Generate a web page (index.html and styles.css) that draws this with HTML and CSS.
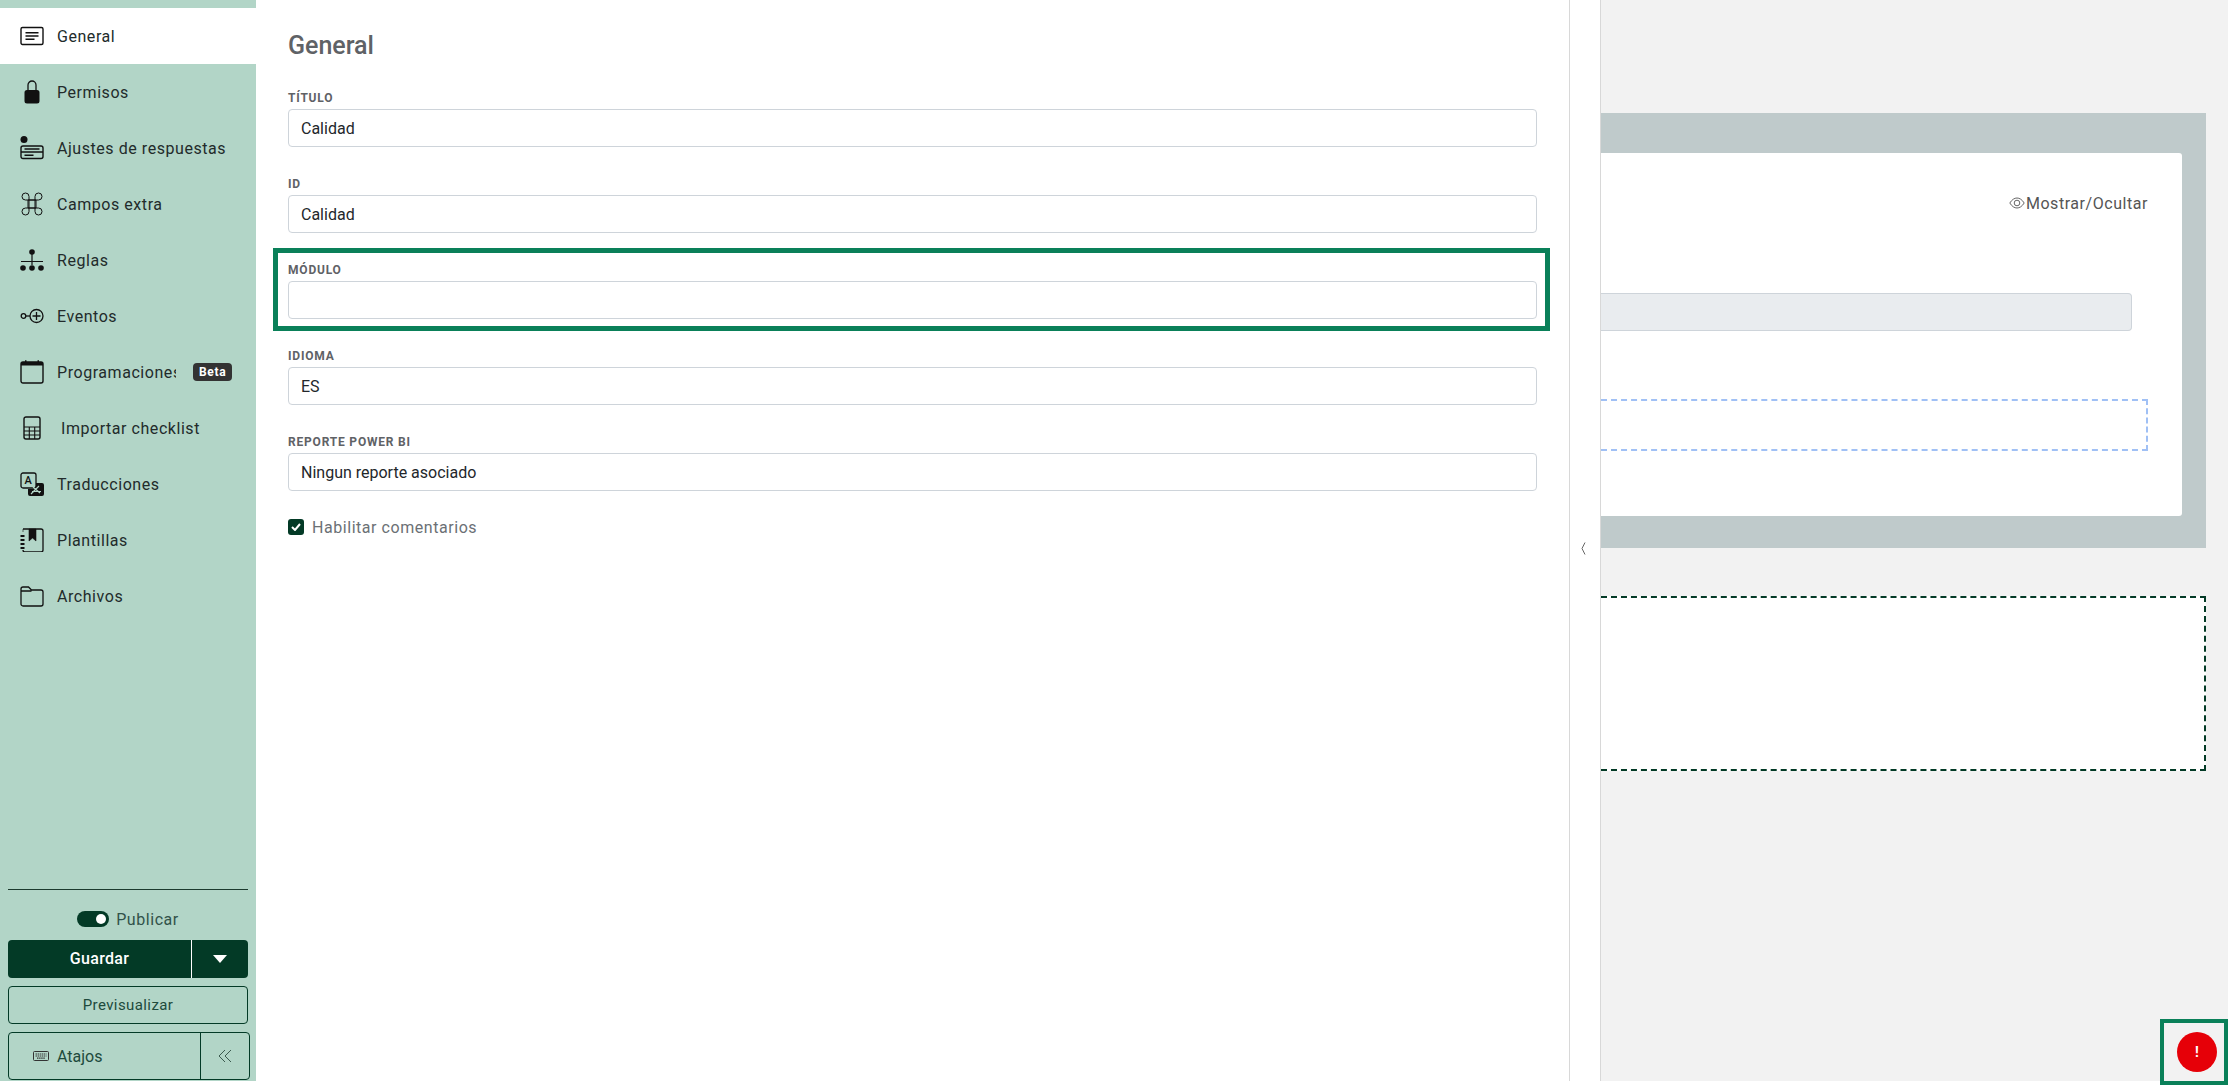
FILE: index.html
```html
<!DOCTYPE html>
<html lang="es">
<head>
  <meta charset="UTF-8">
  <title>General</title>
  <link rel="stylesheet" href="styles.css">
</head>
<body>
  <div class="App">
    <aside class="Sidebar">
      <ul class="menu">
        <li class="item active">
          <svg class="icon" viewBox="0 0 24 24"><rect x="1" y="3.500" width="22" height="17" rx="1.500" fill="none" stroke="#111" stroke-width="1.400"/><path d="M5.500 8h13v1.500h-13zM5.500 11.300h13v1.500h-13zM5.500 14.600h9v1.500h-9z" fill="#111"/></svg>
          <span class="name">General</span>
        </li>
        <li class="item">
          <svg class="icon" viewBox="0 0 24 24"><path d="M8 11V5a4 4 0 0 1 8 0v6" fill="none" stroke="#111" stroke-width="1.300"/><path d="M7 10h10a2.500 2.500 0 0 1 2.500 2.500V21a2.500 2.500 0 0 1-2.500 2.500H7A2.500 2.500 0 0 1 4.500 21v-8.500A2.500 2.500 0 0 1 7 10z" fill="#111"/></svg>
          <span class="name">Permisos</span>
        </li>
        <li class="item">
          <svg class="icon" viewBox="0 0 24 24"><circle cx="4" cy="3.500" r="3.500" fill="#111"/><rect x="1" y="10" width="22" height="12.500" rx="2" fill="none" stroke="#111" stroke-width="1.400"/><path d="M1 16h22M4.500 13h15M4.500 19.200h9" stroke="#111" stroke-width="1.400"/></svg>
          <span class="name">Ajustes de respuestas</span>
        </li>
        <li class="item">
          <svg class="icon" viewBox="0 0 24 24"><path d="M8 8h8v8H8zM8 8H5.500A3.500 3.500 0 1 1 9 4.500V19.500A3.500 3.500 0 1 1 5.500 16H18.500A3.500 3.500 0 1 1 15 19.500V4.500A3.500 3.500 0 1 1 18.500 8H8z" fill="none" stroke="#111" stroke-width="1"/></svg>
          <span class="name">Campos extra</span>
        </li>
        <li class="item">
          <svg class="icon" viewBox="0 0 24 24"><circle cx="12" cy="4" r="2.800" fill="#111"/><circle cx="3" cy="20" r="2.800" fill="#111"/><circle cx="12" cy="20" r="2.800" fill="#111"/><circle cx="21" cy="20" r="2.800" fill="#111"/><path d="M12 6v11M1 13.500h22" fill="none" stroke="#111" stroke-width="1.200"/></svg>
          <span class="name">Reglas</span>
        </li>
        <li class="item">
          <svg class="icon" viewBox="0 0 24 24"><circle cx="3.500" cy="12" r="2.300" fill="none" stroke="#111" stroke-width="1.300"/><path d="M6 12h4" stroke="#111" stroke-width="1.300"/><circle cx="16.500" cy="12" r="6.500" fill="none" stroke="#111" stroke-width="1.300"/><path d="M16.500 8v8M12.500 12h8" stroke="#111" stroke-width="1.300"/></svg>
          <span class="name">Eventos</span>
        </li>
        <li class="item">
          <svg class="icon" viewBox="0 0 24 24"><rect x="1" y="2" width="22" height="21" rx="2" fill="none" stroke="#111" stroke-width="1.400"/><path d="M1 2h22v3.500H1zM5 .2h1.500V2H5zM17.500 .2H19V2h-1.500z" fill="#111"/></svg>
          <span class="name clip">Programaciones</span>
          <span class="badge">Beta</span>
        </li>
        <li class="item">
          <svg class="icon" viewBox="0 0 24 24"><rect x="4" y="1" width="16" height="22" rx="2" fill="none" stroke="#111" stroke-width="1.400"/><path d="M4 11h16M4 15h16M4 19h16M9.300 11v12M14.700 11v12" stroke="#111" stroke-width="1.100"/></svg>
          <span class="name shift">Importar checklist</span>
        </li>
        <li class="item">
          <svg class="icon" viewBox="0 0 24 24"><rect x="1" y="1" width="15" height="15" rx="2" fill="#b2d5c7" stroke="#111" stroke-width="1.300"/><path d="M9 11h13a2 2 0 0 1 2 2v9a2 2 0 0 1-2 2H10a2 2 0 0 1-2-2v-5h8v-6z" fill="#111"/><path d="M11 22l8-8M13 15l7 6M12 19.500h9" stroke="#b2d5c7" stroke-width="1.200"/><text x="8.500" y="12" class="glyph">A</text></svg>
          <span class="name">Traducciones</span>
        </li>
        <li class="item">
          <svg class="icon" viewBox="0 0 24 24"><path d="M3 1h18a2 2 0 0 1 2 2v19a2 2 0 0 1-2 2H5a2 2 0 0 1-2-2" fill="none" stroke="#111" stroke-width="1.300"/><path d="M3 1v3M9 1h7v12l-3.500-3L9 13z" fill="#111" stroke="#111" stroke-width=".6"/><path d="M.5 8h4M.5 12h4M.5 16h4M.5 20h4" stroke="#111" stroke-width="1.800"/></svg>
          <span class="name">Plantillas</span>
        </li>
        <li class="item">
          <svg class="icon" viewBox="0 0 24 24"><path d="M1 5a2 2 0 0 1 2-2h5.500l3 3H21a2 2 0 0 1 2 2v12a2 2 0 0 1-2 2H3a2 2 0 0 1-2-2zM1 7h10.500" fill="none" stroke="#111" stroke-width="1.300"/></svg>
          <span class="name">Archivos</span>
        </li>
      </ul>

      <div class="Bottom">
        <div class="publish">
          <span class="toggle"><span class="knob"></span></span>
          <span>Publicar</span>
        </div>
        <div class="saveBtn">
          <span class="saveText">Guardar</span>
          <span class="saveArrow"><svg width="14" height="8" viewBox="0 0 14 8"><path d="M0 0h14L7 8z" fill="#fff"/></svg></span>
        </div>
        <div class="previewBtn">Previsualizar</div>
        <div class="shortcuts">
          <span class="shortcutText">
            <svg width="16" height="10" viewBox="0 0 16 10"><rect x=".5" y=".5" width="15" height="9" rx="1" fill="none" stroke="#333" /><path d="M2.500 3h11M2.500 5h11M4 7.200h8" stroke="#333" stroke-width="1.200" stroke-dasharray="1.500 .6"/></svg>
            Atajos
          </span>
          <span class="collapseBtn"><svg width="14" height="14" viewBox="0 0 14 14"><path d="M7 1L1 7l6 6M13 1L7 7l6 6" fill="none" stroke="#3b5a4e" stroke-width="1"/></svg></span>
        </div>
      </div>
    </aside>

    <main class="MainFrame">
      <h2 class="title">General</h2>
      <div class="field">
        <label class="label">TÍTULO</label>
        <input class="input" type="text" value="Calidad" readonly>
      </div>
      <div class="field">
        <label class="label">ID</label>
        <input class="input" type="text" value="Calidad" readonly>
      </div>
      <div class="field marked">
        <label class="label">MÓDULO</label>
        <input class="input" type="text" readonly>
      </div>
      <div class="field">
        <label class="label">IDIOMA</label>
        <input class="input" type="text" value="ES" readonly>
      </div>
      <div class="field">
        <label class="label">REPORTE POWER BI</label>
        <input class="input" type="text" value="Ningun reporte asociado" readonly>
      </div>
      <div class="comments">
        <span class="check"><svg width="10" height="8" viewBox="0 0 10 8"><path d="M1 4l3 3 5-6" fill="none" stroke="#fff" stroke-width="2"/></svg></span>
        <span>Habilitar comentarios</span>
      </div>
    </main>

    <div class="strip">
      <svg width="5" height="13" viewBox="0 0 5 13"><path d="M4 .5L1 6.500l3 6" fill="none" stroke="#666" stroke-width="1"/></svg>
    </div>

    <section class="canvas">
      <div class="band">
        <div class="card">
          <div class="toggleView">
            <svg width="16" height="12" viewBox="0 0 16 12"><path d="M.8 6C3 2.500 5.500 1 8 1s5 1.500 7.200 5C13 9.500 10.500 11 8 11S3 9.500.8 6z" fill="none" stroke="#666" stroke-width="1"/><circle cx="8" cy="6" r="2.800" fill="none" stroke="#666" stroke-width="1"/></svg>
            <span>Mostrar/Ocultar</span>
          </div>
          <div class="grayInput"></div>
          <div class="dropBlue"></div>
        </div>
      </div>
      <div class="dropDark"></div>
    </section>
  </div>

  <div class="alertFrame">
    <span class="alertDot">!</span>
  </div>
</body>
</html>
```

FILE: styles.css
```css
* {
  box-sizing: border-box;
}

html, body {
  margin: 0;
  height: 1085px;
  overflow: hidden;
  background-color: #fff;
  font-family: Roboto, "Liberation Sans", sans-serif;
}

.App {
  display: flex;
  height: 1081px;
}

/* left menu */
.Sidebar {
  width: 256px;
  flex-shrink: 0;
  padding-top: 8px;
  display: flex;
  flex-direction: column;
  justify-content: space-between;
  background-color: #b2d5c7;
}

.menu {
  list-style: none;
  margin: 0;
  padding: 0;
}

.item {
  height: 56px;
  padding-left: 20px;
  display: flex;
  align-items: center;
  font-size: 16px;
  letter-spacing: 0.55px;
  color: #222b2b;
}

.item.active {
  background-color: #fff;
}

.icon {
  width: 24px;
  height: 24px;
  flex-shrink: 0;
  margin-right: 13px;
}

.glyph {
  font-size: 11px;
  font-weight: 500;
  text-anchor: middle;
  fill: #111;
}

.name.clip {
  width: 119px;
  overflow: hidden;
  white-space: nowrap;
}

.name.shift {
  margin-left: 4px;
}

.badge {
  margin-left: 17px;
  padding: 0 6px;
  height: 18px;
  line-height: 18px;
  border-radius: 4px;
  background-color: #333;
  color: #fff;
  font-size: 12px;
  font-weight: 700;
  letter-spacing: 0.7px;
}

.Bottom {
  margin: 0 8px 1px 8px;
  border-top: 1px solid #1c3a2e;
  padding-top: 20px;
}

.publish {
  display: flex;
  justify-content: center;
  align-items: center;
  gap: 7px;
  height: 18px;
  font-size: 16px;
  letter-spacing: 0.55px;
  color: #31524a;
}

.toggle {
  width: 32px;
  height: 16px;
  padding: 3px;
  display: flex;
  justify-content: flex-end;
  border-radius: 8px;
  background-color: #033a26;
}

.knob {
  width: 10px;
  height: 10px;
  border-radius: 50%;
  background-color: #fff;
}

.saveBtn {
  width: 240px;
  height: 38px;
  margin-top: 12px;
  display: flex;
  border-radius: 4px;
  background-color: #033a26;
  color: #fff;
  font-size: 16px;
  font-weight: 500;
  letter-spacing: 0.3px;
}

.saveText {
  width: 184px;
  line-height: 38px;
  text-align: center;
  border-right: 1px solid #fff;
}

.saveArrow {
  flex: 1;
  display: flex;
  align-items: center;
  justify-content: center;
}

.previewBtn {
  width: 240px;
  height: 38px;
  margin-top: 8px;
  line-height: 36px;
  text-align: center;
  border: 1px solid #033a26;
  border-radius: 4px;
  font-size: 15px;
  letter-spacing: 0.4px;
  color: #204a3c;
}

.shortcuts {
  width: 242px;
  height: 48px;
  margin-top: 8px;
  display: flex;
  border: 1px solid #033a26;
  border-radius: 4px;
  font-size: 16px;
  color: #204a3c;
}

.shortcutText {
  width: 192px;
  padding-left: 24px;
  display: flex;
  align-items: center;
  gap: 8px;
  border-right: 1px solid #033a26;
}

.collapseBtn {
  flex: 1;
  display: flex;
  align-items: center;
  justify-content: center;
}

/* form */
.MainFrame {
  width: 1314px;
  flex-shrink: 0;
  padding: 32px 32px 0;
  border-right: 1px solid #d8d8d8;
  background-color: #fff;
}

.title {
  margin: 0 0 29px;
  height: 28px;
  line-height: 28px;
  font-size: 25px;
  font-weight: 500;
  color: #5f6266;
}

.field {
  position: relative;
  margin-bottom: 28px;
  width: 1249px;
}

.field.marked::after {
  content: "";
  position: absolute;
  left: -15px;
  right: -13px;
  top: -13px;
  bottom: -12px;
  border: 5px solid #0a8059;
  pointer-events: none;
}

.label {
  display: block;
  height: 18px;
  margin-bottom: 2px;
  line-height: 18px;
  font-size: 12px;
  font-weight: 700;
  letter-spacing: 0.8px;
  color: #5f6266;
}

.input {
  display: block;
  width: 100%;
  height: 38px;
  padding: 0 12px;
  border: 1px solid #ced4da;
  border-radius: 4px;
  font-family: inherit;
  font-size: 16px;
  color: #23272b;
  background-color: #fff;
  outline: none;
}

.comments {
  display: flex;
  align-items: center;
  gap: 8px;
  height: 16px;
  font-size: 16px;
  letter-spacing: 0.55px;
  color: #6b7075;
}

.check {
  width: 16px;
  height: 16px;
  display: flex;
  align-items: center;
  justify-content: center;
  border-radius: 3px;
  background-color: #033a26;
}

.strip {
  width: 31px;
  flex-shrink: 0;
  padding: 540px 0 0 11px;
  border-right: 1px solid #d8d8d8;
  background-color: #fff;
}

/* preview on the right, cut off by the strip */
.canvas {
  flex: 1;
  min-width: 0;
  padding: 113px 22px 0 0;
  background-color: #f2f2f2;
}

.band {
  height: 435px;
  padding: 40px 24px 0 0;
  background-color: #bfcacb;
}

.card {
  position: relative;
  height: 363px;
  padding: 0 34px 0 0;
  border-radius: 0 3px 3px 0;
  background-color: #fff;
}

.toggleView {
  height: 100px;
  padding-top: 41px;
  display: flex;
  justify-content: flex-end;
  align-items: flex-start;
  gap: 1px;
  font-size: 16px;
  letter-spacing: 0.55px;
  color: #555;
}

.toggleView svg {
  margin-top: 3px;
}

.grayInput {
  height: 38px;
  margin: 40px 16px 0 0;
  border: 1px solid #ced4da;
  border-left: 0;
  border-radius: 0 4px 4px 0;
  background-color: #e9ecef;
}

.dropBlue {
  height: 52px;
  margin-top: 68px;
  border: 2px dashed #a0c0f5;
  border-left: 0;
}

.dropDark {
  height: 175px;
  margin-top: 48px;
  border: 2px dashed #033a26;
  border-left: 0;
  background-color: #fff;
}

/* marked red button, over the page corner */
.alertFrame {
  position: absolute;
  right: 0;
  bottom: 0;
  width: 68px;
  height: 66px;
  display: flex;
  align-items: center;
  justify-content: center;
  border: 4px solid #0a8059;
  background-color: #f2f2f2;
}

.alertDot {
  width: 40px;
  height: 40px;
  margin-left: 6px;
  border-radius: 50%;
  background-color: #e60008;
  color: #fff;
  text-align: center;
  line-height: 40px;
  font-size: 14px;
  font-weight: 700;
}
```
